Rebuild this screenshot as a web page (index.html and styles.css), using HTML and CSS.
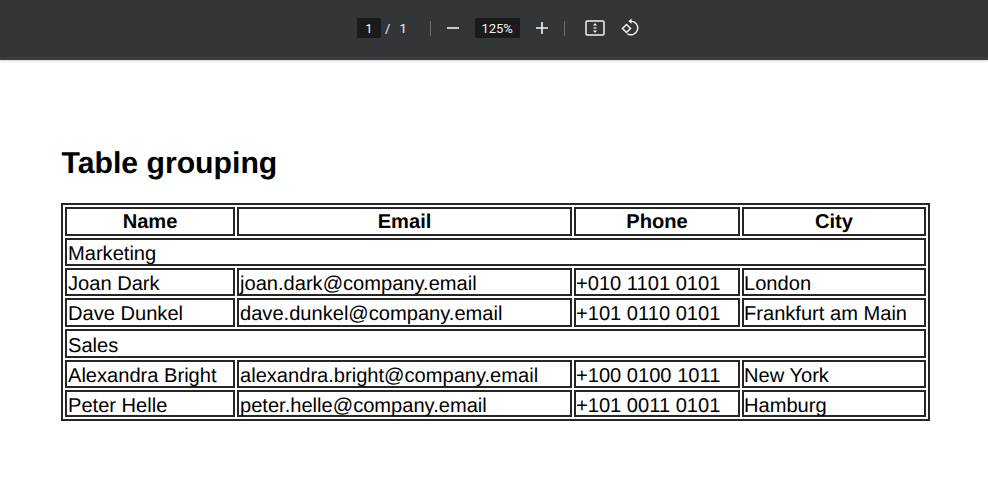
FILE: index.html
```html
<!DOCTYPE html>
<html lang="en">
<head>
<meta charset="utf-8">
<title>Table grouping</title>
<link rel="stylesheet" href="styles.css">
</head>
<body>
<header class="toolbar">
  <div class="page-nav"><span class="field page-field">1</span><span class="sep-slash">/</span><span class="total">1</span></div>
  <span class="divider"></span>
  <svg class="icon minus" width="14" height="14" viewBox="0 0 14 14"><path d="M1 7h12" stroke="#f1f3f4" stroke-width="1.6"/></svg>
  <span class="field zoom-field">125%</span>
  <svg class="icon plus" width="14" height="14" viewBox="0 0 14 14"><path d="M1 7h12M7 1v12" stroke="#f1f3f4" stroke-width="1.6"/></svg>
  <span class="divider second"></span>
  <svg class="icon fit" width="20" height="16" viewBox="0 0 20 16"><rect x="1" y="1" width="18" height="14" rx="1.5" fill="none" stroke="#f1f3f4" stroke-width="1.5"/><path d="M10 3l2 2.6H8zM10 13l2-2.6H8z" fill="#f1f3f4"/><path d="M8.5 7.4h3M8.5 8.6h3" stroke="#f1f3f4" stroke-width=".6"/></svg>
  <svg class="icon rotate" width="20" height="20" viewBox="0 0 20 20"><path d="M9.5 3.2h1.5a6.8 6.8 0 1 1-3.6 12.6" fill="none" stroke="#f1f3f4" stroke-width="1.5"/><path d="M11.5 0.6v5.2L8.4 3.2z" fill="#f1f3f4"/><path d="M6.5 6.5L10.5 10.5 6.5 14.5 2.5 10.5z" fill="none" stroke="#f1f3f4" stroke-width="1.5"/></svg>
</header>
<main class="doc">
  <h1>Table grouping</h1>
  <table>
    <colgroup><col class="c-name"><col class="c-email"><col class="c-phone"><col class="c-city"></colgroup>
    <thead>
      <tr><th>Name</th><th>Email</th><th>Phone</th><th>City</th></tr>
    </thead>
    <tbody>
      <tr class="r-a"><td colspan="4">Marketing</td></tr>
      <tr class="r-a"><td>Joan Dark</td><td>joan.dark@company.email</td><td>+010 1101 0101</td><td>London</td></tr>
      <tr class="r-b"><td>Dave Dunkel</td><td>dave.dunkel@company.email</td><td>+101 0110 0101</td><td>Frankfurt am Main</td></tr>
      <tr class="r-c"><td colspan="4">Sales</td></tr>
      <tr class="r-a"><td>Alexandra Bright</td><td>alexandra.bright@company.email</td><td>+100 0100 1011</td><td>New York</td></tr>
      <tr class="r-d"><td>Peter Helle</td><td>peter.helle@company.email</td><td>+101 0011 0101</td><td>Hamburg</td></tr>
    </tbody>
  </table>
</main>
</body>
</html>
```
FILE: styles.css
```css
html, body { margin: 0; padding: 0; background: #fff; overflow: hidden; }
body { width: 988px; height: 484px; font-family: "Liberation Sans", Arial, sans-serif; color: #000; }
.toolbar {
  height: 56px; background: #323639; display: flex; align-items: center;
  padding: 0 0 1px 357px; box-shadow: 0 1px 2px rgba(0,0,0,.2); border-bottom: 3px solid #3b3e41;
  font-family: Roboto, sans-serif; color: #f1f3f4;
}
.page-nav { display: flex; align-items: center; font-size: 13px; }
.field { background: #191b1c; height: 20px; display: flex; align-items: center; justify-content: center; font-size: 13px; }
.page-field { width: 24px; }
.sep-slash { margin-left: 4px; }
.total { margin-left: 9px; }
.divider { width: 1px; height: 15px; background: #6a6d70; margin-left: 23px; }
.icon { display: block; }
.minus { margin-left: 15px; }
.zoom-field { width: 45px; margin-left: 15px; }
.plus { margin-left: 15px; }
.divider.second { margin-left: 15px; }
.fit { margin-left: 20px; }
.rotate { margin-left: 15px; }
.doc { padding: 86px 58px 0 61px; text-rendering: geometricPrecision; }
h1 { margin: 0 0 21px; padding-left: 0.5px; font-size: 30.2px; line-height: 36px; font-weight: 700; }
table { table-layout: fixed; width: 869px; border: 2px solid #262626; border-spacing: 2px; font-size: 20.1px; }
.c-name { width: 170px; }
.c-email { width: 335px; }
.c-phone { width: 166px; }
.c-city { width: 184px; }
th, td { border: 2px solid #262626; padding: 4px 1px 0; line-height: 20px; text-align: left; white-space: nowrap; }
th { text-align: center; padding: 2px 1px 0; line-height: 23px; }
td:nth-child(3), td:nth-child(4) { padding-left: 0; }
.r-b td { padding-bottom: 1px; }
.r-c td { padding-top: 5px; }
.r-d td { padding-top: 5px; line-height: 18px; }
```
